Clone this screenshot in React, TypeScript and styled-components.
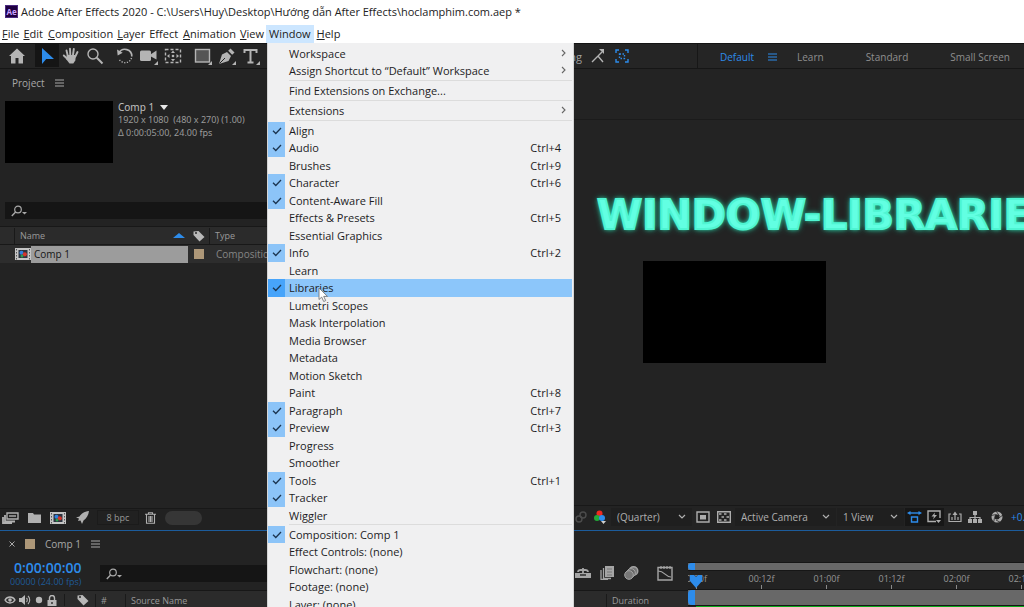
import React from "react";
import styled, { createGlobalStyle, css } from "styled-components";

const blue = "#2d8ceb";
const uiFont = `"Open Sans", "Noto Sans", sans-serif`;

const Global = createGlobalStyle`
  *, *::before, *::after { box-sizing: border-box; }
  body { margin: 0; background: #232323; font-family: ${uiFont}; font-size: 11px; }
  button, select, input { font: inherit; color: inherit; border: 0; padding: 0; margin: 0; background: none; }
  h1, h2, p { margin: 0; font-size: inherit; font-weight: inherit; }
  svg { display: block; flex: none; }
`;

/* ---------- shell ---------- */

const Screen = styled.div`
  height: 100vh;
  overflow: hidden;
  display: flex;
  flex-direction: column;
  background: #232323;
  color: #a0a0a0;
`;

const TitleBar = styled.header`
  display: flex;
  align-items: center;
  gap: 3px;
  height: 25px;
  flex: none;
  padding: 0 0 2px 5px;
  background: #fff;
  color: #222;
  line-height: 22px;
  white-space: nowrap;
`;

const AppBadge = styled.span`
  width: 13px;
  height: 13px;
  background: #1f0040;
  border: 1px solid #4b2a80;
  color: #c9a2ff;
  font-size: 8px;
  font-weight: 700;
  line-height: 11px;
  text-align: center;
`;

const MenuBar = styled.nav`
  display: flex;
  height: 18px;
  flex: none;
  background: #fff;
  color: #222;
`;

const MenuSlot = styled.div`
  position: relative;
  &:nth-child(3n) { margin-left: 1px; }
`;

const MenuButton = styled.button<{ $open?: boolean; $plain?: boolean }>`
  display: block;
  height: 18px;
  padding: 0 ${(p) => (p.$open ? 3 : 2)}px;
  line-height: 18px;
  background: ${(p) => (p.$open ? "#cce6ff" : "transparent")};
  span { display: block; }
  ${(p) =>
    !p.$plain &&
    css`
      span::first-letter { text-decoration: underline; }
    `}
`;

/* ---------- drop-down menu ---------- */

const Menu = styled.div`
  position: absolute;
  z-index: 5;
  top: 18px;
  left: 1px;
  width: 307px;
  padding: 2px 1px 2px 0;
  background: #f0f0f1;
  border: solid #d4d4d4;
  border-width: 0 1px;
  color: #1d1d1f;
`;

const MenuGroup = styled.div`
  width: 100%;
`;

const Separator = styled.hr`
  height: 1px;
  margin: 0 0 1px 21px;
  border: 0;
  background: #dcdcdc;
`;

const MenuRow = styled.button<{ $on?: boolean }>`
  position: relative;
  display: grid;
  grid-template-columns: 17px 1fr auto;
  grid-template-rows: 100%;
  column-gap: 4px;
  width: 100%;
  height: 17px;
  padding-right: 11px;
  line-height: 18px;
  text-align: left;
  white-space: nowrap;
  background: ${(p) => (p.$on ? "#8cc6fa" : "transparent")};
  &:nth-child(even) { height: 18px; }
`;

const SingleGroup = styled(MenuGroup)`
  ${MenuRow} { height: 18px; }
`;

const CheckCell = styled.span<{ $checked?: boolean; $on?: boolean }>`
  display: grid;
  place-items: center;
  height: 100%;
  background: ${(p) => (p.$on ? "#47a4fa" : p.$checked ? "#8cc4f8" : "transparent")};
`;

const Arrow = styled.span`
  display: flex;
  align-items: center;
  height: 16px;
  margin-right: -8px;
  color: #666;
`;

const Pointer = styled.span`
  position: absolute;
  left: 50px;
  top: 8px;
`;

/* ---------- toolbar ---------- */

const Toolbar = styled.div`
  display: flex;
  height: 26px;
  flex: none;
  border-top: 1px solid #141414;
  border-bottom: 1px solid #161616;
  background: #252525;
`;

const ToolSide = styled.div`
  display: flex;
  align-items: center;
  gap: 6px;
  flex: 0 0 582px;
  padding-left: 5px;
`;

const ToolGroup = styled.div`
  display: flex;
  height: 100%;
`;

const Tool = styled.button<{ $active?: boolean }>`
  display: grid;
  place-items: center;
  width: 24px;
  height: 23px;
  color: ${(p) => (p.$active ? blue : "#b4b4b4")};
  background: ${(p) => (p.$active ? "#151515" : "transparent")};
`;

const SnapLabel = styled.span`
  margin-left: auto;
`;

const SnapTools = styled.div`
  display: flex;
  flex: 0 0 116px;
  padding-left: 4px;
  border-right: 1px solid #171717;
`;

const Workspaces = styled.div`
  display: flex;
  align-items: center;
  gap: 42px;
  padding: 0 0 0 22px;
  height: 26px;
  white-space: nowrap;
  font-size: 10px;
`;

const Workspace = styled.button<{ $active?: boolean }>`
  display: flex;
  align-items: center;
  gap: 14px;
  margin-right: ${(p) => (p.$active ? "-22px" : "0")};
  color: ${(p) => (p.$active ? blue : "#8f8f8f")};
`;

/* ---------- panels ---------- */

const Main = styled.main`
  display: flex;
  flex: 1;
  min-height: 0;
  border-bottom: 1px solid #1c5c9c;
`;

const ProjectPanel = styled.section`
  display: flex;
  flex-direction: column;
  flex: 0 0 573px;
`;

const PanelTab = styled.h2`
  display: flex;
  align-items: center;
  gap: 10px;
  height: 28px;
  padding-left: 12px;
  font-size: 10px;
  color: #a8a8a8;
`;

const Summary = styled.div`
  display: flex;
  gap: 5px;
  padding: 4px 5px 0;
  height: 105px;
`;

const Thumb = styled.div`
  width: 108px;
  height: 62px;
  background: #000;
`;

const CompFacts = styled.div`
  font-family: "Noto Sans", sans-serif;
  font-size: 9px;
  line-height: 13px;
  white-space: pre;
  color: #9a9a9a;
`;

const CompTitle = styled.p`
  display: flex;
  align-items: center;
  gap: 6px;
  height: 12px;
  font-size: 10px;
  color: #c0c0c0;
`;

const SearchBox = styled.label<{ $w?: string }>`
  display: flex;
  align-items: center;
  height: 17px;
  width: ${(p) => p.$w ?? "auto"};
  margin-left: ${(p) => (p.$w ? "0" : "5px")};
  padding-left: 6px;
  background: #151515;
  color: #a8a8a8;
  input { flex: 1; min-width: 0; height: 100%; outline: 0; }
`;

const Items = styled.table`
  width: 100%;
  margin-top: 7px;
  border-collapse: collapse;
  table-layout: fixed;
  font-size: 10px;
  text-align: left;
  th, td { padding: 0; font-weight: 400; height: 18px; line-height: 16px; }
  th { background: #2b2b2b; font-size: 9px; border-bottom: 1px solid #181818; border-top: 1px solid #181818; color: #9a9a9a; }
  td { background: #2d2d2d; color: #858585; }
`;

const NameHead = styled.div`
  display: flex;
  align-items: center;
  justify-content: space-between;
  margin-left: 14px;
  padding: 0 3px 0 5px;
  border-left: 1px solid #191919;
`;

const NameCell = styled.div`
  display: flex;
  align-items: center;
  padding-left: 15px;
  height: 18px;
`;

const NameValue = styled.span`
  flex: 1;
  height: 17px;
  padding-left: 3px;
  background: #9c9c9c;
  color: #161616;
  font-weight: 500;
  line-height: 17px;
`;

const Swatch = styled.span`
  display: block;
  width: 10px;
  height: 10px;
  background: #ad9778;
`;

const Center = styled.div`
  display: grid;
  place-items: center;
`;

const TypeHead = styled.div`
  border-left: 1px solid #191919;
  padding-left: 5px;
`;

const TypeCell = styled.div`
  padding-left: 7px;
`;

const ProjectFooter = styled.footer`
  display: flex;
  align-items: center;
  gap: 6px;
  height: 22px;
  margin-top: auto;
  border-top: 1px solid #181818;
  padding: 0 0 4px 1px;
  background: #212121;
  color: #b0b0b0;
  button { display: grid; place-items: center; width: 18px; height: 17px; }
`;

const Depth = styled.span`
  width: 42px;
  height: 15px;
  margin-right: -4px;
  border: 1px solid #1b1b1b;
  text-align: center;
  font-size: 9px;
  line-height: 14px;
  color: #989898;
`;

const Pill = styled.span`
  width: 37px;
  height: 14px;
  border-radius: 7px;
  background: #363636;
`;

/* ---------- viewer ---------- */

const Viewer = styled.section`
  display: flex;
  flex-direction: column;
  flex: 1;
  min-width: 0;
  border-left: 1px solid #171717;
`;

const ViewerHead = styled.div`
  height: 51px;
  flex: none;
  border-bottom: 1px solid #1b1b1b;
`;

const Stage = styled.div`
  flex: 1;
  min-height: 0;
  overflow: hidden;
  padding: 71px 0 0 23px;
`;

const Glow = styled.p`
  && { font: 700 41px/48px "DejaVu Sans", sans-serif; }
  width: max-content;
  color: #62ffe2;
  -webkit-text-stroke: 2px #4ff5d2;
  text-shadow: 0 0 4px #2fdcb0, 0 0 7px #24b893;
`;

const Frame = styled.div`
  width: 183px;
  height: 102px;
  margin: 22px 0 0 46px;
  background: #000;
`;

const ViewerFooter = styled.footer`
  display: flex;
  align-items: center;
  height: 25px;
  flex: none;
  padding-bottom: 3px;
  border-top: 1px solid #181818;
  white-space: nowrap;
  overflow: hidden;
  font-size: 10px;
  color: #b0b0b0;
`;

const IconButton = styled.button<{ $w?: number; $dark?: boolean; $dim?: boolean }>`
  display: grid;
  place-items: center;
  flex: none;
  width: ${(p) => p.$w ?? 21}px;
  height: 18px;
  background: ${(p) => (p.$dark ? "#171717" : "transparent")};
  color: ${(p) => (p.$dim ? "#4c4c4c" : "#adadad")};
`;

const Dropdown = styled.label<{ $w: number }>`
  display: grid;
  grid-template-columns: 1fr 14px;
  align-items: center;
  flex: none;
  width: ${(p) => p.$w}px;
  height: 18px;
  margin-right: 1px;
  padding-left: 6px;
  background: #1f1f1f;
  select { appearance: none; width: 100%; outline: 0; }
`;

const Exposure = styled.span`
  padding-left: 2px;
  color: ${blue};
`;

/* ---------- timeline ---------- */

const Timeline = styled.section`
  display: flex;
  height: 76px;
  flex: none;
  overflow: hidden;
`;

const TimelineLeft = styled.div`
  flex: 0 0 688px;
  display: flex;
  flex-direction: column;
`;

const TimelineTab = styled(PanelTab)`
  padding-left: 9px;
  height: 26px;
  flex: none;
`;

const TimeRow = styled.div`
  display: flex;
  align-items: center;
  height: 33px;
  flex: none;
  padding-left: 10px;
`;

const TimeCode = styled.div`
  width: 90px;
  font-size: 14px;
  font-weight: 600;
  line-height: 16px;
  color: ${blue};
  padding-left: 4px;
  small {
    display: block;
    margin-left: -4px;
    font-size: 9px;
    font-weight: 400;
    line-height: 12px;
    color: #1e5a98;
  }
`;

const Switches = styled.div`
  display: flex;
  gap: 9px;
  margin-left: auto;
  padding-right: 15px;
  color: #a5a5a5;
`;

const Columns = styled.div`
  display: flex;
  align-items: center;
  height: 19px;
  flex: none;
  padding-left: 4px;
  border-top: 1px solid #171717;
  background: #2b2b2b;
  font-size: 9px;
  color: #9a9a9a;
`;

const ColumnIcons = styled.div`
  display: flex;
  align-items: center;
  gap: 3px;
  width: 60px;
  color: #b8b8b8;
`;

const Column = styled.div<{ $w: number }>`
  flex: none;
  width: ${(p) => p.$w}px;
  padding-left: 5px;
  border-left: 1px solid #1a1a1a;
`;

const Track = styled.div`
  position: relative;
  flex: 1;
  min-width: 0;
  padding-top: 31px;
`;

const Range = styled.div<{ $h: number }>`
  height: ${(p) => p.$h}px;
  border: solid #161616;
  border-width: 1px 0;
  background: #686868;
  &::before {
    content: "";
    display: block;
    width: 7px;
    height: 100%;
    border-radius: 4px 0 0 4px;
    background: ${blue};
  }
`;

const Ruler = styled.div`
  display: flex;
  height: 18px;
  overflow: hidden;
  padding-top: 2px;
`;

const Tick = styled.div`
  flex: 0 0 65px;
  font-size: 9px;
  line-height: 12px;
  text-align: center;
  color: #969696;
  &:first-child { margin-left: -24px; }
  &::after {
    content: "";
    display: block;
    width: 1px;
    height: 4px;
    margin: 0 auto;
    background: #8a8a8a;
  }
`;

const Playhead = styled.span`
  position: absolute;
  left: 2px;
  top: 44px;
`;

const Cached = styled.div`
  height: 2px;
  margin-left: 8px;
  background: #0ca81c;
`;

/* ---------- icons ---------- */

type IconProps = { w?: number; h?: number; box?: string; children: React.ReactNode };
const Icon = ({ w = 18, h = 18, box, children }: IconProps) => (
  <svg width={w} height={h} viewBox={box ?? `0 0 ${w} ${h}`} fill="none" stroke="currentColor" strokeWidth="1.4" aria-hidden="true">
    {children}
  </svg>
);

const Corner = () => <path d="M18 14v4h-4z" fill="currentColor" stroke="none" />;

const Burger = () => (
  <Icon w={9} h={8}>
    <path d="M0 1h9M0 4h9M0 7h9" strokeWidth="1.2" />
  </Icon>
);

const Chevron = () => (
  <Icon w={8} h={6}>
    <path d="M1 1l3 3 3-3" strokeWidth="1.2" />
  </Icon>
);

const SearchIcon = () => (
  <Icon w={17} h={12}>
    <circle cx="7" cy="4.5" r="3.3" strokeWidth="1.2" />
    <path d="M4.6 7L.8 11" />
    <path d="M11 7h5l-2.500 2.600z" fill="currentColor" stroke="none" />
  </Icon>
);

const TagIcon = () => (
  <Icon w={12} h={12}>
    <path d="M.5 1.500V5l6 6.500 5-4.500L5.500 1z" fill="#b8b8b8" stroke="none" />
    <circle cx="3" cy="3" r="1" fill="#2b2b2b" stroke="none" />
  </Icon>
);

const FilmIcon = () => (
  <Icon w={16} h={12}>
    <path d="M0 0h16v12H0z" fill="#c4c4c4" stroke="none" />
    <path d="M1.500 1v11M14.500 1v11" stroke="#555" strokeWidth="1" strokeDasharray="1.500 1.500" />
    <path d="M3.500 2h9v8h-9z" fill="#2c3440" stroke="none" />
    <circle cx="6.500" cy="4.800" r="2" fill="#2f7fe0" stroke="none" />
    <circle cx="9.800" cy="6.300" r="2.100" fill="#d5352b" stroke="none" />
    <circle cx="7" cy="8" r="1.500" fill="#2f9a4c" stroke="none" />
  </Icon>
);

/* ---------- data ---------- */

const menuNames = ["File", "Edit", "Composition", "Layer", "Effect", "Animation", "View", "Window", "Help"];

type Entry = { label: string; keys?: string; checked?: boolean; sub?: boolean; on?: boolean };
const c = (label: string, keys?: string): Entry => ({ label, keys, checked: true });
const n = (label: string, keys?: string): Entry => ({ label, keys });

const windowMenu: Entry[][] = [
  [{ label: "Workspace", sub: true }, { label: "Assign Shortcut to “Default” Workspace", sub: true }],
  [n("Find Extensions on Exchange...")],
  [{ label: "Extensions", sub: true }],
  [
    c("Align"), c("Audio", "Ctrl+4"), n("Brushes", "Ctrl+9"), c("Character", "Ctrl+6"), c("Content-Aware Fill"),
    n("Effects & Presets", "Ctrl+5"), n("Essential Graphics"), c("Info", "Ctrl+2"), n("Learn"),
    { label: "Libraries", checked: true, on: true }, n("Lumetri Scopes"), n("Mask Interpolation"), n("Media Browser"),
    n("Metadata"), n("Motion Sketch"), n("Paint", "Ctrl+8"), c("Paragraph", "Ctrl+7"), c("Preview", "Ctrl+3"),
    n("Progress"), n("Smoother"), c("Tools", "Ctrl+1"), c("Tracker"), n("Wiggler"),
  ],
  [c("Composition: Comp 1"), n("Effect Controls: (none)"), n("Flowchart: (none)"), n("Footage: (none)"), n("Layer: (none)")],
];

function WindowMenu() {
  return (
    <Menu role="menu" aria-label="Window">
      {windowMenu.map((group, i) => {
        const Group = group.length === 1 ? SingleGroup : MenuGroup;
        return (
          <React.Fragment key={i}>
            {i > 0 && <Separator />}
            <Group>
              {group.map((e) => (
                <MenuRow key={e.label} role="menuitem" $on={e.on}>
                  <CheckCell $checked={e.checked} $on={e.on}>
                    {e.checked && (
                      <Icon w={10} h={8}>
                        <path d="M1 3.800l2.800 2.700L9 1" stroke="#1c3550" strokeWidth="1.300" />
                      </Icon>
                    )}
                  </CheckCell>
                  <span>{e.label}</span>
                  {e.keys && <span>{e.keys}</span>}
                  {e.sub && (
                    <Arrow>
                      <Icon w={5} h={8}>
                        <path d="M1 1l3 3-3 3" strokeWidth="1.100" />
                      </Icon>
                    </Arrow>
                  )}
                  {e.on && (
                    <Pointer>
                      <Icon w={11} h={16}>
                        <path d="M1 1v11.500l2.700-2.400 2 4.400 2-.9-2-4.200h3.800z" fill="#fff" stroke="#777" strokeWidth=".9" />
                      </Icon>
                    </Pointer>
                  )}
                </MenuRow>
              ))}
            </Group>
          </React.Fragment>
        );
      })}
    </Menu>
  );
}

function Tools() {
  return (
    <ToolSide>
      <ToolGroup>
        <Tool aria-label="Home">
          <Icon><path d="M9 1.500L1 9h2v7.500h4.500V11h3v5.500H15V9h2z" fill="currentColor" stroke="none" /></Icon>
        </Tool>
      </ToolGroup>
      <ToolGroup>
        <Tool $active aria-label="Selection">
          <Icon><path d="M4 1v16l4.200-5H16z" fill="currentColor" stroke="none" /></Icon>
        </Tool>
        <Tool aria-label="Hand">
          <Icon>
            <path d="M5.800 9L4.500 3.500M8.300 8L8 1.800M11 8l.8-6M13.300 9.500L15.500 5M5.500 12L1.800 8.500" strokeWidth="1.900" strokeLinecap="round" />
            <path d="M4.900 8h9.200l-.8 5.500-2 3H7.500L4 12z" fill="currentColor" stroke="none" />
          </Icon>
        </Tool>
        <Tool aria-label="Zoom">
          <Icon><circle cx="7" cy="7" r="5" /><path d="M10.800 10.800L16.500 16.500" strokeWidth="2" /></Icon>
        </Tool>
      </ToolGroup>
      <ToolGroup>
        <Tool aria-label="Rotate">
          <Icon>
            <path d="M3 6a6.800 6.800 0 0 1 12.800 3.500" strokeWidth="1.600" />
            <path d="M15.500 11A6.800 6.800 0 0 1 3 12" strokeDasharray="1.200 1.500" />
            <path d="M1 2.500l.7 6 5-2.800z" fill="currentColor" stroke="none" />
          </Icon>
        </Tool>
        <Tool aria-label="Camera">
          <Icon>
            <rect x="0" y="3.500" width="11" height="10.500" rx="1.500" fill="currentColor" stroke="none" />
            <path d="M9 8.500L16.500 3.500v9z" fill="currentColor" stroke="none" />
            <Corner />
          </Icon>
        </Tool>
        <Tool aria-label="Pan Behind">
          <Icon>
            <path d="M1.500 2.500h15v13h-15z" strokeDasharray="3 2" />
            <path d="M9 3.500l2 2.500H7zM9 14.500l2-2.500H7zM3 9l2.500-2v4zM15 9l-2.500-2v4z" fill="currentColor" stroke="none" />
            <circle cx="9" cy="9" r="1.300" fill="currentColor" stroke="none" />
          </Icon>
        </Tool>
      </ToolGroup>
      <ToolGroup>
        <Tool aria-label="Rectangle">
          <Icon><rect x="1.500" y="2.500" width="14" height="12.500" fill="#555" /><Corner /></Icon>
        </Tool>
        <Tool aria-label="Pen">
          <Icon>
            <path d="M1 17L4 7.500 9 5l4 4-2.500 5z" fill="currentColor" stroke="none" />
            <path d="M1.500 16.500L7 11" stroke="#252525" strokeWidth="1" />
            <path d="M10.200 3.800L12.500 1.500l4 4-2.300 2.300z" fill="currentColor" stroke="none" />
            <Corner />
          </Icon>
        </Tool>
        <Tool aria-label="Type">
          <Icon><path d="M2.500 6V3h12v3M8.500 3v12.500M5.500 15.500h6" strokeWidth="2" /><Corner /></Icon>
        </Tool>
      </ToolGroup>
      <SnapLabel>Snapping</SnapLabel>
    </ToolSide>
  );
}

function Project() {
  return (
    <ProjectPanel>
      <PanelTab>Project <Burger /></PanelTab>
      <Summary>
        <Thumb />
        <CompFacts>
          <CompTitle>
            Comp 1
            <Icon w={8} h={5}><path d="M0 0h8L4 5z" fill="#e8e8e8" stroke="none" /></Icon>
          </CompTitle>
          <p>{"1920 x 1080  (480 x 270) (1.00)"}</p>
          <p>Δ 0:00:05:00, 24.00 fps</p>
        </CompFacts>
      </Summary>
      <SearchBox>
        <SearchIcon />
        <input aria-label="Search project" />
      </SearchBox>
      <Items>
        <colgroup>
          <col style={{ width: 188 }} />
          <col style={{ width: 21 }} />
          <col />
        </colgroup>
        <thead>
          <tr>
            <th>
              <NameHead>
                Name
                <Icon w={12} h={5}><path d="M0 5h12L6 0z" fill={blue} stroke="none" /></Icon>
              </NameHead>
            </th>
            <th><Center><TagIcon /></Center></th>
            <th><TypeHead>Type</TypeHead></th>
          </tr>
        </thead>
        <tbody>
          <tr>
            <td><NameCell><FilmIcon /><NameValue>Comp 1</NameValue></NameCell></td>
            <td><Center><Swatch /></Center></td>
            <td><TypeCell>Composition</TypeCell></td>
          </tr>
        </tbody>
      </Items>
      <ProjectFooter>
        <button aria-label="Interpret Footage">
          <Icon w={17} h={12}>
            <path d="M5 1h11v6H5z" />
            <path d="M7 4h7" />
            <path d="M3 3v6.500h10" strokeWidth="1.800" />
            <path d="M1 5v6h9" strokeWidth="1.800" />
          </Icon>
        </button>
        <button aria-label="New Folder">
          <Icon w={13} h={11}><path d="M0 1h5l1 1.500h7V11H0z" fill="currentColor" stroke="none" /></Icon>
        </button>
        <button aria-label="New Composition"><FilmIcon /></button>
        <button aria-label="Project Settings">
          <Icon w={13} h={13}>
            <path d="M13 0C8 .5 5 3 3.500 5.500L0 6.500l3 1L2 10l2.500-.5L6 13l1.500-3.500C10.500 7.500 12.500 4 13 0z" fill="currentColor" stroke="none" />
          </Icon>
        </button>
        <Depth>8 bpc</Depth>
        <button aria-label="Delete">
          <Icon w={11} h={12}>
            <path d="M0 2.200h11M3.500 2V.7h4V2M1.500 2.500v8.800h8V2.500M4 4v6M5.500 4v6M7 4v6" strokeWidth="1.100" />
          </Icon>
        </button>
        <Pill />
      </ProjectFooter>
    </ProjectPanel>
  );
}

function Select({ label, value, w }: { label: string; value: string; w: number }) {
  return (
    <Dropdown $w={w}>
      <select aria-label={label}><option>{value}</option></select>
      <Chevron />
    </Dropdown>
  );
}

function CompViewer() {
  return (
    <Viewer>
      <ViewerHead />
      <Stage>
        <Glow>WINDOW-LIBRARIES</Glow>
        <Frame />
      </Stage>
      <ViewerFooter>
        <IconButton $w={14} $dim aria-label="Snapshot">
          <Icon w={12} h={12}><circle cx="4" cy="8" r="3" /><circle cx="8" cy="4" r="3" /></Icon>
        </IconButton>
        <IconButton $w={23} aria-label="Channels">
          <Icon w={12} h={14}>
            <circle cx="5.500" cy="3.500" r="3" fill="#ee2a20" stroke="none" />
            <circle cx="3" cy="8" r="3" fill="#22a837" stroke="none" />
            <circle cx="8" cy="8" r="3" fill="#2d8ceb" stroke="none" />
            <path d="M7 11h5l-2.500 3z" fill="#d0d0d0" stroke="none" />
          </Icon>
        </IconButton>
        <Select label="Resolution" value="(Quarter)" w={81} />
        <IconButton $w={20} aria-label="Region of Interest">
          <Icon w={14} h={12}>
            <path d="M1 1h12v10H1z" />
            <path d="M4 4h6v4.500H4z" fill="currentColor" stroke="none" />
          </Icon>
        </IconButton>
        <IconButton $w={22} aria-label="Transparency Grid">
          <Icon w={14} h={12}>
            <path d="M.7.700h12.600v10.600H.7z" />
            <path d="M2 3h10M4.500 6h7.500M2 9h10" strokeWidth="1.500" strokeDasharray="2.500 2.500" />
          </Icon>
        </IconButton>
        <Select label="3D View" value="Active Camera" w={101} />
        <Select label="View Layout" value="1 View" w={67} />
        <IconButton $dark $w={18} aria-label="Pixel Aspect Ratio">
          <Icon w={15} h={12}>
            <g color={blue} stroke={blue}>
              <path d="M2 2h11" />
              <path d="M3.500 0v4L0 2zM11.500 0v4L15 2z" fill={blue} stroke="none" />
              <path d="M4.500 6h6v5h-6z" />
            </g>
          </Icon>
        </IconButton>
        <IconButton $dark aria-label="Fast Previews">
          <Icon w={14} h={13}>
            <path d="M9 11.500H1V1h12v7" />
            <path d="M8 2.500L4.500 6.500H7L6 9.500l4-4.500H7.500z" fill="currentColor" stroke="none" />
            <path d="M9 10h5l-2.500 3z" fill="currentColor" stroke="none" />
          </Icon>
        </IconButton>
        <IconButton aria-label="Timeline">
          <Icon w={14} h={12}>
            <path d="M3 3H1v7.500h12V3h-2M4 6v3M7 4v5M10 6v3" strokeWidth="1.200" />
            <path d="M4.500 4h5L7 .5z" fill="currentColor" stroke="none" />
          </Icon>
        </IconButton>
        <IconButton $w={20} aria-label="Flowchart">
          <Icon w={14} h={12}>
            <path d="M5 0h4v4H5zM0 8h4v4H0zM5 8h4v4H5zM10 8h4v4h-4z" fill="currentColor" stroke="none" />
            <path d="M7 3v6M2 9V6.500h10V9" strokeWidth="1.200" />
          </Icon>
        </IconButton>
        <IconButton $w={24} aria-label="Reset Exposure">
          <Icon w={12} h={12}>
            <circle cx="6" cy="6" r="4" strokeWidth="3" />
            <path d="M5 0l3.500 5M12 4L7 7.500M9.500 11.500L5 9M2.500 12L3.500 6.500M0 4.500L5.500 3.500" stroke="#232323" strokeWidth=".8" />
          </Icon>
        </IconButton>
        <Exposure>+0.0</Exposure>
      </ViewerFooter>
    </Viewer>
  );
}

const ticks = ["0:00f", "00:12f", "01:00f", "01:12f", "02:00f", "02:12f"];

function TimelinePanel() {
  return (
    <Timeline>
      <TimelineLeft>
        <TimelineTab>
          <Icon w={6} h={6}><path d="M.5.500l5 5M5.500.500l-5 5" strokeWidth="1" /></Icon>
          <Swatch />
          <span>Comp 1</span>
          <Burger />
        </TimelineTab>
        <TimeRow>
          <TimeCode>0:00:00:00<small>00000 (24.00 fps)</small></TimeCode>
          <SearchBox $w="300px">
            <SearchIcon />
            <input aria-label="Search timeline" />
          </SearchBox>
          <Switches>
            <Icon w={16} h={14}>
              <path d="M0 7h16v5H0z" fill="currentColor" stroke="none" />
              <path d="M8 2v9M3 6c0-3 10-3 10 0" strokeWidth="1.800" />
              <path d="M5 9h6" stroke="#252525" />
            </Icon>
            <Icon w={15} h={14}>
              <path d="M5 0h9v11H5z" fill="currentColor" stroke="none" />
              <path d="M3.500 2v10.500H11M1 4v9.500h7" strokeWidth="1.300" />
              <path d="M7 3h5M7 6h5M7 9h5" stroke="#777" strokeWidth="1" />
            </Icon>
            <Icon w={15} h={14}>
              <circle cx="9.500" cy="5" r="4.300" fill="#777" />
              <circle cx="7" cy="7" r="4.300" fill="#666" strokeWidth="1" />
              <circle cx="5" cy="9" r="4.300" fill="#777" strokeWidth="1" />
            </Icon>
            <span />
            <Icon w={16} h={15}>
              <path d="M1 1.500h14v12.500H1z" />
              <path d="M1 5c7 0 7 6 13 6M4 0v3M7 0v3M10 0v3M13 0v3" strokeWidth="1.200" />
            </Icon>
          </Switches>
        </TimeRow>
        <Columns>
          <ColumnIcons>
            <Icon w={12} h={10}>
              <path d="M1 5c2.500-4 7.500-4 10 0-2.500 4-7.500 4-10 0z" />
              <circle cx="6" cy="5" r="1.800" fill="currentColor" stroke="none" />
            </Icon>
            <Icon w={12} h={10}>
              <path d="M0 3h2.500L6 0v10L2.500 7H0z" fill="currentColor" stroke="none" />
              <path d="M7.500 3c1 1 1 3 0 4M9 1c2.300 2 2.300 6 0 8" strokeWidth="1.100" />
            </Icon>
            <Icon w={10} h={8}><circle cx="5" cy="4" r="3.200" fill="currentColor" stroke="none" /></Icon>
            <Icon w={10} h={11}>
              <path d="M.5 5h9v6h-9z" fill="currentColor" stroke="none" />
              <path d="M2.500 5V3a2.500 2.500 0 0 1 5 0v2" />
              <path d="M5 7v2" stroke="#2b2b2b" />
            </Icon>
          </ColumnIcons>
          <Column $w={31}><Center><TagIcon /></Center></Column>
          <Column $w={30}>#</Column>
          <Column $w={481}>Source Name</Column>
          <Column $w={67}>Duration</Column>
          <Column $w={15} />
        </Columns>
      </TimelineLeft>
      <Track>
        <Range $h={9} />
        <Ruler>
          {ticks.map((t) => <Tick key={t}>{t}</Tick>)}
        </Ruler>
        <Range $h={17} />
        <Cached />
        <Playhead>
          <Icon w={12} h={15}><path d="M0 0h4l2 2 2-2h4v6l-6 7-6-7z" fill={blue} stroke="none" /></Icon>
        </Playhead>
      </Track>
    </Timeline>
  );
}

export default function App() {
  return (
    <Screen>
      <Global />
      <TitleBar>
        <AppBadge>Ae</AppBadge>
        <h1>{"Adobe After Effects 2020 - C:\\Users\\Huy\\Desktop\\Hướng dẫn After Effects\\hoclamphim.com.aep *"}</h1>
      </TitleBar>
      <MenuBar>
        {menuNames.map((name) => (
          <MenuSlot key={name}>
            <MenuButton $open={name === "Window"} $plain={name === "Window" || name === "Effect"}>
              <span>{name}</span>
            </MenuButton>
            {name === "Window" && <WindowMenu />}
          </MenuSlot>
        ))}
      </MenuBar>
      <Toolbar>
        <Tools />
        <SnapTools>
          <Tool aria-label="Snap Edges">
            <Icon w={14} h={14}>
              <path d="M1 13l6-6 5 6M7 7l4-4" />
              <path d="M8 0h5v5z" fill="currentColor" stroke="none" />
            </Icon>
          </Tool>
          <Tool aria-label="Snap Bounds">
            <Icon w={14} h={14}>
              <g stroke={blue}>
                <path d="M1 4V1h3M10 1h3v3M13 10v3h-3M4 13H1v-3" />
                <path d="M4.500 5h5v4.500h-5z" strokeDasharray="1.500 1.500" />
              </g>
            </Icon>
          </Tool>
        </SnapTools>
        <Workspaces>
          <Workspace $active>Default <Burger /></Workspace>
          <Workspace>Learn</Workspace>
          <Workspace>Standard</Workspace>
          <Workspace>Small Screen</Workspace>
        </Workspaces>
      </Toolbar>
      <Main>
        <Project />
        <CompViewer />
      </Main>
      <TimelinePanel />
    </Screen>
  );
}
